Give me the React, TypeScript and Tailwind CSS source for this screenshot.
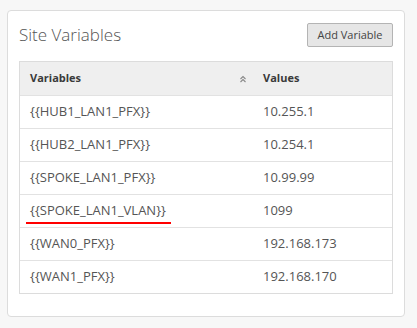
import React from "react";

const rows = [
  { name: "{{HUB1_LAN1_PFX}}", value: "10.255.1" },
  { name: "{{HUB2_LAN1_PFX}}", value: "10.254.1" },
  { name: "{{SPOKE_LAN1_PFX}}", value: "10.99.99" },
  { name: "{{SPOKE_LAN1_VLAN}}", value: "1099", marked: true },
  { name: "{{WAN0_PFX}}", value: "192.168.173" },
  { name: "{{WAN1_PFX}}", value: "192.168.170" },
];

const SortIcon = () => (
  <svg width="8" height="8" viewBox="0 0 8 8" className="text-[#888]">
    <path d="M1.5 4 L4 1.5 L6.5 4 M1.5 7 L4 4.5 L6.5 7" fill="none" stroke="currentColor" strokeWidth="1.1" />
  </svg>
);

const App = () => {
  return (
    <div
      className="h-[328px] w-[417px] bg-[#f7f7f7] pl-[7px] pt-[10px]"
      style={{ fontFamily: '"Open Sans", sans-serif' }}
    >
      <div className="h-[307px] w-[398px] rounded-[4px] border border-[#dcdcdc] bg-white px-[11px] pt-[12px]">
        <div className="flex h-[38px] items-start justify-between">
          <h2 className="text-[17px] font-light leading-[24px] text-[#555]">Site Variables</h2>
          <button className="h-[24px] w-[86px] rounded-[2px] border border-[#b4b4b4] bg-[#e6e6e6] text-[11px] leading-[22px] text-[#444]">
            Add Variable
          </button>
        </div>
        <div className="w-[374px] border border-[#dcdcdc]">
          <div className="flex h-[34px] items-center border-b border-[#e2e2e2] bg-[#efefef] text-[11px] font-bold text-[#3a3a3a]">
            <div className="flex w-[233px] items-center justify-between pl-[10px] pr-[6px]">
              <span>Variables</span>
              <SortIcon />
            </div>
            <div className="pl-[10px]">Values</div>
          </div>
          {rows.map((r, i) => (
            <div
              key={r.name}
              className={
                i < rows.length - 1
                  ? "flex h-[33px] items-center border-b border-[#e2e2e2] text-[13px] text-[#555]"
                  : "flex h-[32px] items-center text-[13px] text-[#555]"
              }
            >
              <div className="relative w-[233px] pl-[10px]">
                {r.name}
                {r.marked && (
                  <div className="absolute left-[6px] top-[21px] h-[2px] w-[145px] bg-[#f00]" />
                )}
              </div>
              <div className="pl-[10px]">{r.value}</div>
            </div>
          ))}
        </div>
      </div>
    </div>
  );
};

export default App;
